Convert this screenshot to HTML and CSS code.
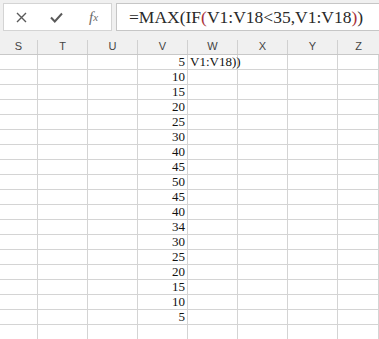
FILE: index.html
```html
<!DOCTYPE html>
<html lang="en">
  <head>
    <meta charset="UTF-8" />
    <title>sheet</title>
    <link rel="stylesheet" href="styles.css">
  </head>
  <body>
    <div id="formulaBar">
      <div class="bar-buttons">
        <span class="bar-btn">
          <svg width="11" height="11" viewBox="0 0 11 11"><path d="M1 1 L10 10 M10 1 L1 10" stroke="#5a5a5a" stroke-width="1.4" fill="none"/></svg>
        </span>
        <span class="bar-btn">
          <svg width="13" height="11" viewBox="0 0 13 11"><path d="M1 5.5 L4.8 9.5 L12 1.5" stroke="#5a5a5a" stroke-width="2" fill="none"/></svg>
        </span>
        <span class="bar-btn fx">f<small>x</small></span>
      </div>
      <div class="bar-input">=MAX(IF<span class="paren">(</span>V1:V18&lt;35,V1:V18<span class="paren">)</span>)</div>
    </div>
    <div id="colHeads">
      <div>S</div>
      <div>T</div>
      <div>U</div>
      <div>V</div>
      <div>W</div>
      <div>X</div>
      <div>Y</div>
      <div>Z</div>
    </div>
    <div id="sheet"></div>

    <script>
      var values = [5, 10, 15, 20, 25, 30, 40, 45, 50, 45, 40, 34, 30, 25, 20, 15, 10, 5, ""];

      function buildSheet() {
        var sheet = document.getElementById("sheet");
        for (let r = 0; r < values.length; r++) {
          for (let c = 0; c < 8; c++) {
            const cell = document.createElement("div");
            if (c == 3) {
              cell.className = "num";
              cell.textContent = values[r];
            }
            if (c == 4 && r == 0) {
              cell.className = "txt";
              cell.textContent = "V1:V18))";
            }
            sheet.appendChild(cell);
          }
        }
      }

      document.addEventListener("DOMContentLoaded", buildSheet);
    </script>
  </body>
</html>
```

FILE: styles.css
```css
body {
  margin: 0;
  width: 379px;
  height: 339px;
  overflow: hidden;
  background: #fff;
}
#formulaBar {
  display: flex;
  gap: 4px;
  height: 37px;
  padding: 3px 0 0 3px;
  box-sizing: border-box;
  background: #f0f0f0;
}
.bar-buttons {
  display: flex;
  align-items: center;
  width: 109px;
  height: 28px;
  box-sizing: border-box;
  background: #fff;
  border: 1px solid #d4d4d4;
}
.bar-btn {
  width: 36px;
  display: flex;
  justify-content: center;
  align-items: center;
}
.bar-btn svg {
  display: block;
}
.fx {
  font-family: "Liberation Serif", serif;
  font-style: italic;
  font-size: 15px;
  color: #6a6a6a;
  padding-left: 2px;
}
.fx small {
  font-size: 11px;
}
.bar-input {
  flex: 1;
  height: 28px;
  box-sizing: border-box;
  background: #fff;
  border: 1px solid #c6c6c6;
  border-right: none;
  padding-left: 12px;
  font-family: "Liberation Serif", serif;
  font-size: 17.5px;
  line-height: 26px;
  color: #2a2a2a;
  white-space: nowrap;
}
.paren {
  color: #a8303a;
}
#colHeads,
#sheet {
  display: grid;
  grid-template-columns: 38px repeat(6, 50px) 41px;
}
#colHeads {
  height: 18px;
  padding-top: 3px;
  box-sizing: border-box;
  background: #f0f0f0;
  border-bottom: 1px solid #c8c8c8;
}
#colHeads > div {
  height: 14px;
  border-right: 1px solid #d0d0d0;
  font-family: "Liberation Sans", sans-serif;
  font-size: 11px;
  line-height: 12px;
  text-align: center;
  color: #444;
}
#colHeads > div:last-child {
  border-right: none;
}
#sheet > div {
  height: 15px;
  box-sizing: border-box;
  border-right: 1px solid #d4d4d4;
  border-bottom: 1px solid #d4d4d4;
  font-family: "Liberation Serif", serif;
  font-size: 13px;
  line-height: 14px;
  color: #111;
  white-space: nowrap;
}
#sheet > div.num {
  text-align: right;
  padding-right: 2px;
}
#sheet > div.txt {
  padding-left: 2px;
  overflow: visible;
}
```
